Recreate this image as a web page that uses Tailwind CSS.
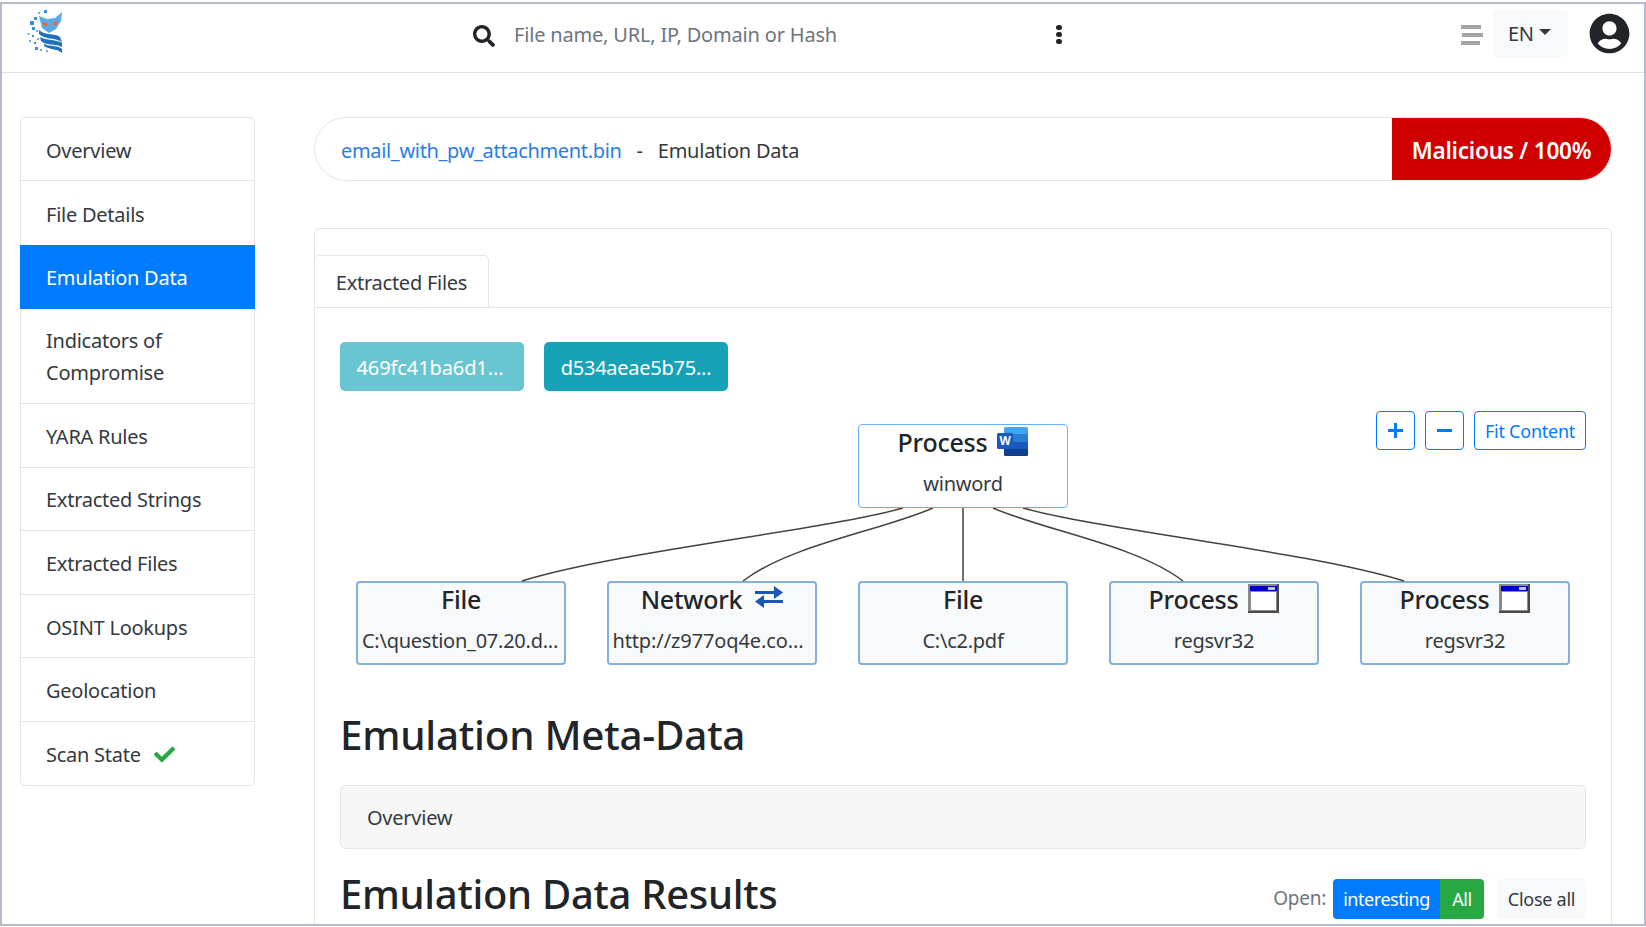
<!DOCTYPE html>
<html lang="en">
<head>
<meta charset="UTF-8">
<title>Emulation Data</title>
<script src="https://cdn.jsdelivr.net/npm/@tailwindcss/browser@4"></script>
</head>
<body class="bg-white">
<div class="mt-[2px] h-[924px] border-2 border-[#b4bccc] overflow-hidden text-[20px] leading-[32px] text-[#212529] font-['Noto_Sans',sans-serif] tracking-[-0.25px]">

  <!-- top bar -->
  <header class="h-[69px] border-b border-[#dfe3e8] flex items-center relative">
    <svg class="ml-[25px] mb-[13px] w-[36px] h-[43px]" viewBox="0 0 36 43">
      <g fill="#3a8fdc">
        <rect x="7" y="7" width="3" height="3"/><rect x="3" y="11" width="4" height="4"/><rect x="5" y="17" width="3" height="3"/><circle cx="1.5" cy="24" r="1"/><rect x="5" y="25" width="2" height="2"/><circle cx="3" cy="31" r="1"/><rect x="7" y="32" width="2" height="2"/><rect x="8" y="37" width="3" height="3"/><circle cx="14" cy="40" r="1"/><circle cx="20" cy="41" r="1"/><circle cx="12" cy="3" r="1"/><rect x="17" y="0" width="3" height="3"/><circle cx="10" cy="21" r="1"/><circle cx="11" cy="29" r="1"/>
      </g>
      <path d="M12 6 L20 9 L28 8 L35 2 L34 11 L29 19 L22 23 L15 18 Z" fill="#5aa9ea"/>
      <path d="M15 12 L22 14 L18 17 Z M31 10 L25 14 L29 16 Z" fill="#ee6a2c"/>
      <path d="M12 20 C18 26 28 23 33 27 L35 32 C27 27 18 30 12 24 Z M13 27 C20 31 29 29 35 33 L35 37 C27 33 19 36 14 31 Z M17 34 C24 37 31 35 35 39 L35 43 C29 38 23 40 17 36 Z" fill="#1f6fc0"/>
    </svg>
    <svg class="ml-[410px] mb-[5px] w-[22px] h-[22px] text-[#212529]" viewBox="0 0 512 512" fill="currentColor"><path d="M505 442.7L405.3 343c-4.5-4.5-10.6-7-17-7H372c27.6-35.3 44-79.7 44-128C416 93.1 322.9 0 208 0S0 93.1 0 208s93.1 208 208 208c48.3 0 92.7-16.4 128-44v16.3c0 6.4 2.5 12.5 7 17l99.7 99.7c9.4 9.4 24.6 9.4 33.9 0l28.3-28.3c9.4-9.4 9.4-24.6.1-34zM208 336c-70.7 0-128-57.2-128-128 0-70.7 57.2-128 128-128 70.7 0 128 57.2 128 128 0 70.7-57.2 128-128 128z"/></svg>
    <span class="ml-[19px] mb-[7px] w-[542px] text-[#6c757d] tracking-[-0.18px]">File name, URL, IP, Domain or Hash</span>
    <span class="mb-[8px] flex flex-col gap-[2px] w-[6px]">
      <i class="block w-[6px] h-[5px] rounded-full bg-[#212529]"></i>
      <i class="block w-[6px] h-[5px] rounded-full bg-[#212529]"></i>
      <i class="block w-[6px] h-[5px] rounded-full bg-[#212529]"></i>
    </span>
    <span class="ml-auto mb-[6px] flex flex-col gap-[4px]">
      <i class="block w-[20px] h-[4px] bg-[#a3a3a3]"></i>
      <i class="block w-[21px] h-[4px] bg-[#a3a3a3] ml-[1px]"></i>
      <i class="block w-[19px] h-[4px] bg-[#a3a3a3]"></i>
    </span>
    <button class="ml-[10px] mb-[9px] w-[75px] h-[47px] rounded-[5px] bg-[#f8f9fa] flex items-center pl-[15px] gap-[5px] text-[#343a40]">EN
      <i class="w-0 h-0 border-x-[6px] border-x-transparent border-t-[6px] border-t-[#343a40] mb-[4px]"></i>
    </button>
    <svg class="ml-[21px] mr-[14px] mb-[9px] w-[41px] h-[41px] text-[#212529]" viewBox="0 0 496 512" fill="currentColor"><path d="M248 8C111 8 0 119 0 256s111 248 248 248 248-111 248-248S385 8 248 8zm0 96c48.6 0 88 39.4 88 88s-39.4 88-88 88-88-39.4-88-88 39.4-88 88-88zm0 344c-58.7 0-111.3-26.6-146.5-68.2 18.8-35.4 55.6-59.8 98.5-59.8 2.4 0 4.8.4 7.1 1.1 13 4.2 26.6 6.9 40.9 6.9 14.3 0 28-2.7 40.9-6.9 2.3-.7 4.7-1.1 7.1-1.1 42.9 0 79.7 24.4 98.5 59.8C359.3 421.4 306.7 448 248 448z"/></svg>
  </header>

  <div class="flex pt-[44px] pl-[18px]">
    <!-- side menu -->
    <nav class="w-[235px] shrink-0 self-start border border-[#e3e7ec] rounded-[5px] flex flex-col text-[#343a40]">
      <a class="h-[63px] pl-[25px] pt-[3px] flex items-center border-b border-[#e3e7ec]">Overview</a>
      <a class="h-[64px] pl-[25px] pt-[3px] flex items-center">File Details</a>
      <a class="h-[64px] pl-[26px] pt-[1px] -mx-px flex items-center bg-[#007bff] text-white">Emulation Data</a>
      <a class="h-[95px] pl-[25px] pt-[2px] flex items-center border-b border-[#e3e7ec]">Indicators of<br>Compromise</a>
      <a class="h-[64px] pl-[25px] pt-[2px] flex items-center border-b border-[#e3e7ec]">YARA Rules</a>
      <a class="h-[63px] pl-[25px] pt-[2px] flex items-center border-b border-[#e3e7ec]">Extracted Strings</a>
      <a class="h-[64px] pl-[25px] pt-[2px] flex items-center border-b border-[#e3e7ec]">Extracted Files</a>
      <a class="h-[63px] pl-[25px] pt-[3px] flex items-center border-b border-[#e3e7ec]">OSINT Lookups</a>
      <a class="h-[64px] pl-[25px] pt-[2px] flex items-center border-b border-[#e3e7ec]">Geolocation</a>
      <a class="h-[63px] pl-[25px] pt-[2px] flex items-center gap-[13px]">Scan State
        <svg class="w-[21px] h-[21px] text-[#28a745]" viewBox="0 0 512 512" fill="currentColor"><path d="M173.898 439.404l-166.4-166.4c-9.997-9.997-9.997-26.206 0-36.204l36.203-36.204c9.997-9.998 26.207-9.998 36.204 0L192 312.69 432.095 72.596c9.997-9.997 26.207-9.997 36.204 0l36.203 36.204c9.997 9.997 9.997 26.206 0 36.204l-294.4 294.401c-9.998 9.997-26.207 9.997-36.204-.001z"/></svg>
      </a>
    </nav>

    <main class="ml-[59px] w-[1298px] shrink-0">
      <!-- title bar -->
      <div class="h-[64px] border border-[#e3e7ec] rounded-full flex items-center pl-[26px] overflow-hidden text-[#343a40]">
        <a class="pt-[3px] text-[#2a7de1] tracking-[-0.33px]">email_with_pw_attachment.bin</a>
        <span class="pt-[3px] ml-[15px]">-</span>
        <span class="pt-[3px] ml-[15px]">Emulation Data</span>
        <span class="ml-auto -my-px h-[64px] w-[219px] pt-[3px] bg-[#d10000] text-white font-semibold text-[22.6px] flex items-center justify-center">Malicious / 100%</span>
      </div>

      <section class="mt-[47px] border border-[#e3e7ec] rounded-[5px] px-[25px]">
        <div class="-mx-[25px] mt-[26px] h-[53px] border-b border-[#e3e7ec]">
          <div class="w-[174px] h-[53px] pt-[2px] border border-l-0 border-[#e3e7ec] rounded-t-[5px] bg-white text-[#343a40] flex items-center justify-center">Extracted Files</div>
        </div>

        <div class="mt-[34px] flex gap-[20px] text-white">
          <button class="w-[184px] h-[49px] pt-[3px] pr-[4px] rounded-[5px] bg-[#6ac5d3] tracking-[-0.1px]">469fc41ba6d1...</button>
          <button class="w-[184px] h-[49px] pt-[3px] rounded-[5px] bg-[#17a2b8]">d534aeae5b75...</button>
        </div>

        <!-- process graph -->
        <div class="relative mt-[20px] h-[273px] w-[1246px]">
          <svg class="absolute left-0 top-0 w-[1246px] h-[273px]" viewBox="0 0 1246 273" fill="none" stroke="#3f4347" stroke-width="1.5">
            <path d="M563 97 C480 120 280 140 182 170"/>
            <path d="M593 97 C540 120 450 134 403 170"/>
            <path d="M623 97 L623 170"/>
            <path d="M653 97 C706 120 796 134 843 170"/>
            <path d="M683 97 C766 120 966 140 1064 170"/>
          </svg>

          <div class="absolute right-0 top-0 flex gap-[10px] text-[#007bff]">
            <button class="w-[39px] h-[39px] border border-[#007bff] rounded-[4px] flex items-center justify-center"><svg class="w-[17px] h-[17px]" viewBox="0 0 17 17"><path d="M8.5 1v15M1 8.5h15" stroke="currentColor" stroke-width="3"/></svg></button>
            <button class="w-[39px] h-[39px] border border-[#007bff] rounded-[4px] flex items-center justify-center"><svg class="w-[17px] h-[17px]" viewBox="0 0 17 17"><path d="M1 8.5h15" stroke="currentColor" stroke-width="3"/></svg></button>
            <button class="w-[112px] h-[39px] pt-[1px] border border-[#007bff] rounded-[4px] text-[18px]">Fit Content</button>
          </div>

          <div class="flex justify-center pt-[13px]">
            <div class="relative w-[210px] h-[84px] border border-[#66b0ff] rounded-[4px] bg-white flex flex-col items-center">
              <div class="mt-[1px] flex items-center gap-[10px] font-medium text-[25px] leading-[32px]">Process
                <svg class="w-[31px] h-[29px] mb-[2px]" viewBox="0 0 31 29">
                  <rect x="7" y="0" width="24" height="29" rx="1.5" fill="#41a5ee"/>
                  <rect x="7" y="7" width="24" height="8" fill="#2b7cd3"/>
                  <rect x="7" y="15" width="24" height="7" fill="#185abd"/>
                  <path d="M7 22h24v5.5a1.5 1.5 0 0 1-1.5 1.5H8.5A1.5 1.5 0 0 1 7 27.5z" fill="#103f91"/>
                  <rect x="0" y="6" width="16" height="16" rx="1.5" fill="#185abd"/>
                  <text x="8" y="18" text-anchor="middle" font-size="12" font-weight="700" fill="#fff" font-family="Liberation Sans">W</text>
                </svg>
              </div>
              <div class="mt-[10px] text-[#343a40]">winword</div>
            </div>
          </div>

          <div class="mt-[73px] ml-[16px] flex gap-[41px]">
            <div class="w-[210px] h-[84px] border-2 border-[#86b0dc] rounded-[4px] bg-[#f8f9fa] flex flex-col items-center">
              <div class="mt-[0px] font-medium text-[25px] leading-[32px]">File</div>
              <div class="mt-[10px] pr-[2px] text-[#343a40]">C:\question_07.20.d...</div>
            </div>
            <div class="w-[210px] h-[84px] border-2 border-[#86b0dc] rounded-[4px] bg-[#f8f9fa] flex flex-col items-center">
              <div class="mt-[0px] flex items-center gap-[13px] font-medium text-[25px] leading-[32px]">Network
                <svg class="w-[28px] h-[22px] mb-[4px]" viewBox="0 0 28 22" fill="#1a56b8"><path d="M0 5h19V0l9 6.5-9 6.5V8H0z"/><path d="M28 14H9V9L0 15.5 9 22v-5h19z"/></svg>
              </div>
              <div class="mt-[10px] pr-[8px] text-[#343a40] tracking-[-0.1px]">http://z977oq4e.co...</div>
            </div>
            <div class="w-[210px] h-[84px] border-2 border-[#86b0dc] rounded-[4px] bg-[#f8f9fa] flex flex-col items-center">
              <div class="mt-[0px] font-medium text-[25px] leading-[32px]">File</div>
              <div class="mt-[10px] text-[#343a40]">C:\c2.pdf</div>
            </div>
            <div class="w-[210px] h-[84px] border-2 border-[#86b0dc] rounded-[4px] bg-[#f8f9fa] flex flex-col items-center">
              <div class="mt-[0px] flex items-center gap-[10px] font-medium text-[25px] leading-[32px]">Process
                <svg class="w-[31px] h-[29px] mb-[1px]" viewBox="0 0 31 29"><rect width="31" height="29" fill="#8a8a8a"/><rect x="29" width="2" height="29" fill="#4a4a4a"/><rect y="27" width="31" height="2" fill="#4a4a4a"/><rect x="2" y="2" width="27" height="5" fill="#0000c0"/><rect x="20" y="3" width="7" height="3" fill="#c8c8c8"/><rect x="3" y="8" width="25" height="18" fill="#fff"/></svg>
              </div>
              <div class="mt-[10px] text-[#343a40]">regsvr32</div>
            </div>
            <div class="w-[210px] h-[84px] border-2 border-[#86b0dc] rounded-[4px] bg-[#f8f9fa] flex flex-col items-center">
              <div class="mt-[0px] flex items-center gap-[10px] font-medium text-[25px] leading-[32px]">Process
                <svg class="w-[31px] h-[29px] mb-[1px]" viewBox="0 0 31 29"><rect width="31" height="29" fill="#8a8a8a"/><rect x="29" width="2" height="29" fill="#4a4a4a"/><rect y="27" width="31" height="2" fill="#4a4a4a"/><rect x="2" y="2" width="27" height="5" fill="#0000c0"/><rect x="20" y="3" width="7" height="3" fill="#c8c8c8"/><rect x="3" y="8" width="25" height="18" fill="#fff"/></svg>
              </div>
              <div class="mt-[10px] text-[#343a40]">regsvr32</div>
            </div>
          </div>
        </div>

        <h2 class="mt-[27px] text-[40.4px] leading-[48px] font-medium">Emulation Meta-Data</h2>
        <div class="mt-[26px] h-[64px] w-[1246px] border border-[#e3e7ec] rounded-[5px] bg-[#f7f7f7] pl-[26px] pt-[1px] flex items-center text-[#343a40]">Overview</div>
        <div class="mt-[20px] flex items-center w-[1246px]">
          <h2 class="text-[40px] leading-[48px] font-medium tracking-[-0.3px]">Emulation Data Results</h2>
          <span class="ml-auto text-[#6c757d] text-[19px] mt-[7px]">Open:</span>
          <span class="ml-[7px] mt-[10px] flex h-[40px] rounded-[4px] overflow-hidden text-white text-[18px] tracking-[-0.45px]">
            <button class="w-[107px] bg-[#007bff]">interesting</button>
            <button class="w-[44px] bg-[#28a745]">All</button>
          </span>
          <button class="ml-[13px] mt-[10px] w-[89px] h-[40px] rounded-[4px] bg-[#f8f9fa] text-[#343a40] text-[18px]">Close all</button>
        </div>
        <div class="h-[60px]"></div>
      </section>
    </main>
  </div>
</div>
</body>
</html>
